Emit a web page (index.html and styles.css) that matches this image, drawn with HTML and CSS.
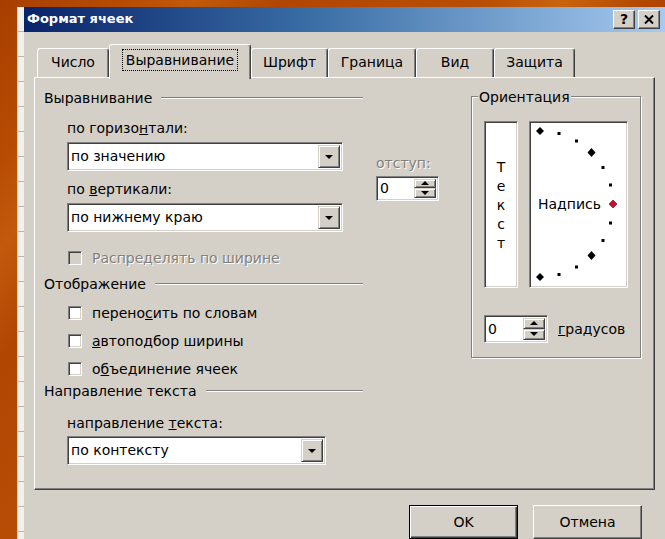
FILE: index.html
```html
<!DOCTYPE html>
<html lang="ru">
<head>
<meta charset="utf-8">
<title>Формат ячеек</title>
<link rel="stylesheet" href="styles.css">
</head>
<body>
<div class="desk">
  <div class="sheet-edge"></div>
  <div class="dialog">
    <div class="titlebar">
      <span class="title">Формат ячеек</span>
      <div class="caption-btns">
        <span class="cap-btn cap-help">?</span>
        <span class="cap-btn">
          <svg width="10" height="9" viewBox="0 0 10 9"><path d="M1 0.5 L9 8.5 M9 0.5 L1 8.5" stroke="#000" stroke-width="2"/></svg>
        </span>
      </div>
    </div>

    <div class="tabs">
      <div class="tab t-num">Число</div>
      <div class="tab t-align active"><span class="focus">Выравнивание</span></div>
      <div class="tab t-font">Шрифт</div>
      <div class="tab t-border">Граница</div>
      <div class="tab t-view">Вид</div>
      <div class="tab t-prot">Защита</div>
    </div>

    <div class="panel">
      <div class="col-left">
        <div class="group-head"><span>Выравнивание</span></div>
        <div class="align-row">
          <div class="fields">
            <div class="lbl lbl-h">по горизо<u>н</u>тали:</div>
            <div class="combo"><span class="val">по значению</span><span class="drop"></span></div>
            <div class="lbl lbl-v">по <u>в</u>ертикали:</div>
            <div class="combo"><span class="val">по нижнему краю</span><span class="drop"></span></div>
          </div>
          <div class="indent">
            <div class="lbl dis">отступ:</div>
            <div class="spin spin-indent">
              <span class="val">0</span>
              <span class="spin-btns"><span class="sb up"></span><span class="sb down"></span></span>
            </div>
          </div>
        </div>
        <div class="check dis check-dist"><span class="box"></span>Распределять по ширине</div>

        <div class="group-head head-view"><span>Отображение</span></div>
        <div class="check check-first"><span class="box"></span>перено<u>с</u>ить по словам</div>
        <div class="check"><span class="box"></span><u>а</u>втоподбор ширины</div>
        <div class="check"><span class="box"></span>о<u>б</u>ъединение ячеек</div>

        <div class="group-head head-dir"><span>Направление текста</span></div>
        <div class="lbl lbl-dir">направление <u>т</u>екста:</div>
        <div class="combo combo-dir"><span class="val">по контексту</span><span class="drop"></span></div>
      </div>

      <fieldset class="orient">
        <legend>Ориентация</legend>
        <div class="orient-boxes">
          <div class="vbox">
            <span>Т</span><span>е</span><span>к</span><span>с</span><span>т</span>
          </div>
          <div class="dial">
            <svg width="95" height="163" viewBox="0 0 95 163">
              <g fill="#000">
                <polygon points="9,4 13,8 9,12 5,8"/>
                <rect x="26.5" y="9" width="3" height="3"/>
                <rect x="44" y="16.5" width="3" height="3"/>
                <polygon points="60.5,25 64.5,29.5 60.5,34 56.5,29.5"/>
                <rect x="70.5" y="43" width="3" height="3"/>
                <rect x="78" y="60.5" width="3" height="3"/>
                <rect x="78" y="98.5" width="3" height="3"/>
                <rect x="70.5" y="116" width="3" height="3"/>
                <polygon points="60.5,128 64.5,132.5 60.5,137 56.5,132.5"/>
                <rect x="44" y="142.5" width="3" height="3"/>
                <rect x="26.5" y="150" width="3" height="3"/>
                <polygon points="9,150 13,154 9,158 5,154"/>
              </g>
              <polygon points="82,77 86,81 82,85 78,81" fill="#c8102e" stroke="#7a0010" stroke-width="0.6"/>
              <text class="dial-text" x="7" y="86">Надпись</text>
            </svg>
          </div>
        </div>
        <div class="deg-row">
          <div class="spin spin-deg">
            <span class="val">0</span>
            <span class="spin-btns"><span class="sb up"></span><span class="sb down"></span></span>
          </div>
          <span class="deg-lbl"><u>г</u>радусов</span>
        </div>
      </fieldset>
    </div>

    <div class="actions">
      <button class="btn btn-default">OK</button>
      <button class="btn">Отмена</button>
    </div>
  </div>
</div>
</body>
</html>
```

FILE: styles.css
```css
* { box-sizing: border-box; }

html, body {
  margin: 0;
  padding: 0;
}

body {
  width: 665px;
  height: 539px;
  overflow: hidden;
  font-family: "DejaVu Sans", "Liberation Sans", sans-serif;
  font-size: 14px;
  line-height: 16px;
  color: #000;
  background:
    linear-gradient(128deg,
      #a83f00 0%, #b84c04 12%, #c25a0c 18%, #b04602 26%,
      #b94f06 45%, #c8640f 52%, #b04500 60%, #a63e00 75%,
      #c05a0c 86%, #ad4400 100%);
}

/* desktop: spreadsheet edge + dialog window */
.desk {
  display: flex;
  height: 100%;
  padding: 7px 0 0 17px;
}

.sheet-edge {
  width: 7px;
  background:
    repeating-linear-gradient(to bottom, #f3f1ec 0, #f3f1ec 24px, #b9b5ad 24px, #b9b5ad 25px);
  border-left: 1px solid #d8d4cc;
}

.dialog {
  width: 641px;
  flex: none;
  background: #d4d0c8;
  display: flex;
  flex-direction: column;
}

/* title bar */
.titlebar {
  height: 25px;
  display: flex;
  align-items: center;
  padding: 0 5px 0 3px;
  background: linear-gradient(to right, #0a246a 0%, #3a6ea5 45%, #a6caf0 100%);
}

.title {
  color: #fff;
  font-weight: bold;
  font-size: 13px;
}

.caption-btns {
  margin-left: auto;
  display: flex;
  gap: 3px;
}

.cap-btn {
  width: 22px;
  height: 19px;
  display: flex;
  align-items: center;
  justify-content: center;
  background: #d4d0c8;
  border: 1px solid;
  border-color: #fff #404040 #404040 #fff;
  box-shadow: inset -1px -1px 0 #808080;
  font-weight: bold;
  font-size: 14px;
}

/* tab strip */
.tabs {
  height: 45px;
  display: flex;
  align-items: flex-end;
  padding-left: 13px;
}

.tab {
  height: 29px;
  display: flex;
  align-items: center;
  justify-content: center;
  border-top: 1px solid #fff;
  border-left: 1px solid #fff;
  border-right: 1px solid #404040;
  border-radius: 3px 3px 0 0;
  box-shadow: inset -1px 0 0 #808080;
  padding-bottom: 1px;
}

.t-num { width: 72px; }
.t-align { width: 142px; }
.t-font { width: 77px; }
.t-border { width: 88px; }
.t-view { width: 78px; }
.t-prot { width: 81px; }

.tab.active {
  height: 35px;
  margin-bottom: -2px;
  position: relative;
  z-index: 1;
  background: #d4d0c8;
  padding-bottom: 4px;
}

.focus {
  outline: 1px dotted #000;
  outline-offset: 2px;
  padding: 0 1px;
}

/* page panel */
.panel {
  margin: 0 10px;
  height: 415px;
  display: flex;
  align-items: flex-start;
  padding: 12px 0 0 9px;
  border: 1px solid;
  border-color: #fff #404040 #404040 #fff;
  box-shadow: inset -1px -1px 0 #808080;
}

.col-left {
  width: 400px;
  flex: none;
  display: flex;
  flex-direction: column;
}

.group-head {
  width: 319px;
  height: 16px;
  display: flex;
  align-items: center;
  gap: 9px;
}

.group-head::after {
  content: "";
  flex: 1;
  border-top: 1px solid #808080;
  border-bottom: 1px solid #fff;
}

.lbl {
  height: 16px;
  white-space: nowrap;
}

.dis {
  color: #808080;
  text-shadow: 1px 1px 0 #fff;
}

.align-row {
  display: flex;
}

.fields {
  margin-left: 23px;
  width: 276px;
  display: flex;
  flex-direction: column;
}

.lbl-h { margin-top: 14px; }
.lbl-v { margin-top: 10px; }

.combo {
  height: 29px;
  margin-top: 6px;
  display: flex;
  align-items: stretch;
  padding: 2px;
  background: #fff;
  border: 1px solid;
  border-color: #808080 #fff #fff #808080;
  box-shadow: inset 1px 1px 0 #404040, inset -1px -1px 0 #d4d0c8;
}

.combo .val {
  flex: 1;
  display: flex;
  align-items: center;
  padding-left: 1px;
}

.drop {
  width: 22px;
  display: flex;
  align-items: center;
  justify-content: center;
  background: #d4d0c8;
  border: 1px solid;
  border-color: #d4d0c8 #404040 #404040 #d4d0c8;
  box-shadow: inset 1px 1px 0 #fff, inset -1px -1px 0 #808080;
}

.drop::before {
  content: "";
  border-left: 4px solid transparent;
  border-right: 4px solid transparent;
  border-top: 4px solid #000;
  margin-top: 1px;
}

.indent {
  margin: 49px 0 0 33px;
  display: flex;
  flex-direction: column;
  gap: 5px;
}

/* spin boxes */
.spin {
  display: flex;
  align-items: stretch;
  padding: 2px;
  background: #fff;
  border: 1px solid;
  border-color: #808080 #fff #fff #808080;
  box-shadow: inset 1px 1px 0 #404040, inset -1px -1px 0 #d4d0c8;
}

.spin .val {
  flex: 1;
  display: flex;
  align-items: center;
  padding-left: 1px;
}

.spin-indent { width: 63px; height: 25px; }
.spin-deg { width: 64px; height: 28px; }

.spin-btns {
  width: 22px;
  display: flex;
  flex-direction: column;
}

.sb {
  flex: 1;
  display: flex;
  align-items: center;
  justify-content: center;
  background: #d4d0c8;
  border: 1px solid;
  border-color: #d4d0c8 #404040 #404040 #d4d0c8;
  box-shadow: inset 1px 1px 0 #fff, inset -1px -1px 0 #808080;
}

.sb::before {
  content: "";
  border-left: 4px solid transparent;
  border-right: 4px solid transparent;
}

.sb.up::before { border-bottom: 4px solid #000; }
.sb.down::before { border-top: 4px solid #000; }

/* check boxes */
.check {
  height: 16px;
  display: flex;
  align-items: center;
  padding-left: 24px;
  white-space: nowrap;
}

.box {
  width: 14px;
  height: 14px;
  flex: none;
  margin-right: 10px;
  background: #fff;
  border: 1px solid;
  border-color: #808080 #fff #fff #808080;
  box-shadow: inset 1px 1px 0 #404040, inset -1px -1px 0 #d4d0c8;
}

.check.dis .box { background: #d4d0c8; }

.check-dist { margin-top: 18px; }
.head-view { margin-top: 10px; }
.check-first { margin-top: 13px; }
.check + .check { margin-top: 12px; }
.head-dir { margin-top: 6px; }
.lbl-dir { margin-top: 16px; margin-left: 23px; }
.combo-dir { width: 259px; margin-left: 23px; margin-top: 5px; }

/* orientation group */
.orient {
  margin: -1px 0 0 27px;
  width: 170px;
  height: 269px;
  padding: 16px 0 0 12px;
  border: 1px solid #808080;
  box-shadow: 1px 1px 0 #fff, inset 1px 1px 0 #fff;
  min-inline-size: 0;
}

.orient legend {
  margin-left: -6px;
  padding: 0 1px;
  background: #d4d0c8;
  line-height: 16px;
}

.orient-boxes {
  display: flex;
  gap: 11px;
}

.vbox,
.dial {
  height: 167px;
  background: #fff;
  border: 1px solid;
  border-color: #808080 #fff #fff #808080;
  box-shadow: inset 1px 1px 0 #404040, inset -1px -1px 0 #d4d0c8;
}

.vbox {
  width: 34px;
  display: flex;
  flex-direction: column;
  align-items: center;
  justify-content: center;
  line-height: 19px;
  padding-top: 3px;
}

.dial {
  width: 99px;
  padding: 1px;
}

.dial svg { display: block; }

.dial-text {
  font-family: "DejaVu Sans", "Liberation Sans", sans-serif;
  font-size: 14px;
}

.deg-row {
  display: flex;
  align-items: center;
  margin-top: 27px;
}

.deg-lbl { margin-left: 10px; }

/* dialog buttons */
.actions {
  display: flex;
  justify-content: flex-end;
  gap: 15px;
  padding: 15px 23px 0 0;
}

.btn {
  width: 109px;
  height: 34px;
  font-family: inherit;
  font-size: 14px;
  color: #000;
  background: #d4d0c8;
  border: 1px solid;
  border-color: #fff #404040 #404040 #fff;
  box-shadow: inset -1px -1px 0 #808080;
  padding: 0;
}

.btn-default {
  border-color: #000;
  box-shadow: inset 1px 1px 0 #fff, inset -1px -1px 0 #404040, inset -2px -2px 0 #808080;
}
```
